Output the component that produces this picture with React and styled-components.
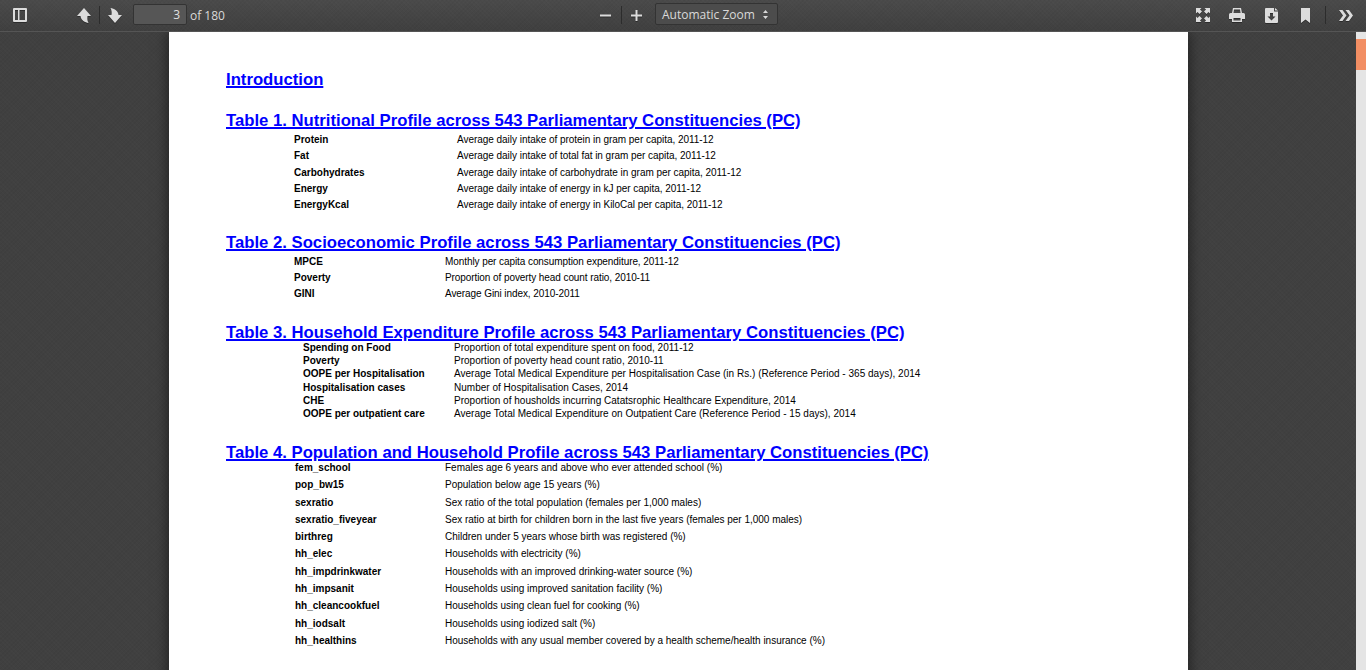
import React from "react";
import styled, { createGlobalStyle } from "styled-components";

const tables = [
  {
    title: "Table 1. Nutritional Profile across 543 Parliamentary Constituencies (PC)",
    gap: 20,
    after: 1,
    inset: 68,
    column: 163,
    rowHeight: 16.3,
    tracking: -0.035,
    rows: [
      ["Protein", "Average daily intake of protein in gram per capita, 2011-12"],
      ["Fat", "Average daily intake of total fat in gram per capita, 2011-12"],
      ["Carbohydrates", "Average daily intake of carbohydrate in gram per capita, 2011-12"],
      ["Energy", "Average daily intake of energy in kJ per capita, 2011-12"],
      ["EnergyKcal", "Average daily intake of energy in KiloCal per capita, 2011-12"],
    ],
  },
  {
    title: "Table 2. Socioeconomic Profile across 543 Parliamentary Constituencies (PC)",
    gap: 19.5,
    after: 1,
    inset: 68,
    column: 151,
    rowHeight: 16,
    tracking: -0.08,
    rows: [
      ["MPCE", "Monthly per capita consumption expenditure, 2011-12"],
      ["Poverty", "Proportion of poverty head count ratio, 2010-11"],
      ["GINI", "Average Gini index, 2010-2011"],
    ],
  },
  {
    title: "Table 3. Household Expenditure Profile across 543 Parliamentary Constituencies (PC)",
    gap: 21,
    after: -2,
    inset: 77,
    column: 151,
    rowHeight: 13.2,
    tracking: 0.015,
    rows: [
      ["Spending on Food", "Proportion of total expenditure spent on food, 2011-12"],
      ["Poverty", "Proportion of poverty head count ratio, 2010-11"],
      ["OOPE per Hospitalisation", "Average Total Medical Expenditure per Hospitalisation Case (in Rs.) (Reference Period - 365 days), 2014"],
      ["Hospitalisation cases", "Number of Hospitalisation Cases, 2014"],
      ["CHE", "Proportion of housholds incurring Catatsrophic Healthcare Expenditure, 2014"],
      ["OOPE per outpatient care", "Average Total Medical Expenditure on Outpatient Care (Reference Period - 15 days), 2014"],
    ],
  },
  {
    title: "Table 4. Population and Household Profile across 543 Parliamentary Constituencies (PC)",
    gap: 23,
    after: -4,
    inset: 69,
    column: 150,
    rowHeight: 17.28,
    tracking: -0.01,
    rows: [
      ["fem_school", "Females age 6 years and above who ever attended school (%)"],
      ["pop_bw15", "Population below age 15 years (%)"],
      ["sexratio", "Sex ratio of the total population (females per 1,000 males)"],
      ["sexratio_fiveyear", "Sex ratio at birth for children born in the last five years (females per 1,000 males)"],
      ["birthreg", "Children under 5 years whose birth was registered (%)"],
      ["hh_elec", "Households with electricity (%)"],
      ["hh_impdrinkwater", "Households with an improved drinking-water source (%)"],
      ["hh_impsanit", "Households using improved sanitation facility (%)"],
      ["hh_cleancookfuel", "Households using clean fuel for cooking (%)"],
      ["hh_iodsalt", "Households using iodized salt (%)"],
      ["hh_healthins", "Households with any usual member covered by a health scheme/health insurance (%)"],
    ],
  },
];

const Icon = ({ w, h, children }) => (
  <IconSvg width={w} height={h} viewBox={`0 0 ${w} ${h}`}>
    {children}
  </IconSvg>
);

const App = () => {
  return (
    <Shell>
      <GlobalStyle />
      <Toolbar>
        <ToolGroup>
          <ToolButton $width={14} $left={13}>
            <Icon w={14} h={14}>
              <path fillRule="evenodd" d="M1 0h12a1 1 0 0 1 1 1v12a1 1 0 0 1-1 1H1a1 1 0 0 1-1-1V1a1 1 0 0 1 1-1zM2 2v10h3V2zM6.500 2v10H12V2z" />
            </Icon>
          </ToolButton>
          <ToolButton $width={14} $left={50}>
            <Icon w={14} h={15}>
              <path d="M7 0l7 8h-3.500c-.5 3 0 5 1 7-3.500-.5-7.500-2.500-8-7H0z" />
            </Icon>
          </ToolButton>
          <Divider $left={8} />
          <ToolButton $width={14} $left={8}>
            <Icon w={14} h={15}>
              <path d="M7 15L0 7h3.500c.5-3 0-5-1-7 3.500.5 7.500 2.500 8 7H14z" />
            </Icon>
          </ToolButton>
          <PageInput>3</PageInput>
          <PageCount>of 180</PageCount>
        </ToolGroup>
        <ZoomGroup>
          <ToolButton $width={11} $top={1}>
            <Icon w={11} h={11}>
              <rect x="0" y="4.500" width="11" height="2" />
            </Icon>
          </ToolButton>
          <Divider $left={10} />
          <ToolButton $width={11} $left={9} $top={1}>
            <Icon w={11} h={11}>
              <path d="M4.500 0h2v4.500H11v2H6.500V11h-2V6.500H0v-2h4.500z" />
            </Icon>
          </ToolButton>
          <ZoomSelect>
            Automatic Zoom
            <SelectArrows width="7" height="11" viewBox="0 0 7 11">
              <path d="M3.500 1L6 4H1zM3.500 10L1 7h5z" />
            </SelectArrows>
          </ZoomSelect>
        </ZoomGroup>
        <ToolGroup>
          <ToolButton $width={14}>
            <Icon w={14} h={14}>
              <path d="M0 0h5.500L4 1.500 6 3.500 3.500 6 1.500 4 0 5.500zM14 0v5.500L12.500 4l-2 2L8 3.500l2-2L8.500 0zM0 14V8.500L1.500 10l2-2L6 10.500l-2 2L5.500 14zM14 14H8.500l1.500-1.500-2-2L10.500 8l2 2L14 8.500z" />
            </Icon>
          </ToolButton>
          <ToolButton $width={16} $left={19}>
            <Icon w={16} h={14}>
              <path fillRule="evenodd" d="M4 0h8l1 5h1.500A1.500 1.500 0 0 1 16 6.500V11h-3v3H3v-3H0V6.500A1.500 1.500 0 0 1 1.500 5H3zM5 1.500L4.500 5h7L11 1.500zM4.500 10v2.500h7V10z" />
            </Icon>
          </ToolButton>
          <ToolButton $width={13} $left={20}>
            <Icon w={13} h={15}>
              <path fillRule="evenodd" d="M0 1a1 1 0 0 1 1-1h8v3.500h4V14a1 1 0 0 1-1 1H1a1 1 0 0 1-1-1zM5 5v3.500H2.500l4 4 4-4H8V5zM10 0l3 2.500h-3z" />
            </Icon>
          </ToolButton>
          <ToolButton $width={9} $left={23}>
            <Icon w={9} h={15}>
              <path d="M0 0h9v15l-4.500-3.500L0 15z" />
            </Icon>
          </ToolButton>
          <Divider $left={15} />
          <ToolButton $width={14} $left={13}>
            <Icon w={14} h={11}>
              <path d="M0 0h3.500l4 5.500-4 5.500H0l4-5.500zM6.500 0H10l4 5.500L10 11H6.500l4-5.500z" />
            </Icon>
          </ToolButton>
        </ToolGroup>
      </Toolbar>
      <Viewer>
        <Page>
          <Intro>Introduction</Intro>
          {tables.map((table) => (
            <section key={table.title}>
              <TableTitle $gap={table.gap} $after={table.after}>{table.title}</TableTitle>
              {table.rows.map(([name, description]) => (
                <Row key={name + description} $inset={table.inset} $column={table.column} $height={table.rowHeight} $tracking={table.tracking}>
                  <VarName>{name}</VarName>
                  <span>{description}</span>
                </Row>
              ))}
            </section>
          ))}
        </Page>
      </Viewer>
      <Scrollbar>
        <Thumb />
      </Scrollbar>
    </Shell>
  );
};

export default App;

const GlobalStyle = createGlobalStyle`
  html, body {
    margin: 0;
    height: 100%;
    overflow: hidden;
    background: #404040;
  }
`;

const weave = `
  repeating-linear-gradient(45deg, rgba(255, 255, 255, 0.012) 0 1px, transparent 1px 3px),
  repeating-linear-gradient(-45deg, rgba(0, 0, 0, 0.03) 0 1px, transparent 1px 3px)
`;

const Shell = styled.div`
  position: relative;
  height: 670px;
  display: flex;
  flex-direction: column;
  overflow: hidden;
`;

const Toolbar = styled.div`
  height: 32px;
  padding: 0 13px 2px 0;
  display: flex;
  align-items: center;
  justify-content: space-between;
  background: ${weave}, linear-gradient(#4a4a4a, #3f3f3f);
  box-shadow: inset 0 -1px 0 #555;
  box-sizing: border-box;
  position: relative;
  z-index: 2;
`;

const ToolGroup = styled.div`
  display: flex;
  align-items: center;
`;

const ZoomGroup = styled(ToolGroup)`
  position: absolute;
  left: 600px;
`;

const ToolButton = styled.div`
  width: ${(p) => p.$width}px;
  margin-left: ${(p) => p.$left || 0}px;
  margin-top: ${(p) => p.$top || 0}px;
  display: flex;
  align-items: center;
  justify-content: center;
`;

const IconSvg = styled.svg`
  fill: #dcdcdc;
  filter: drop-shadow(0 1px 0 rgba(0, 0, 0, 0.35));
`;

const SelectArrows = styled.svg`
  fill: #d9d9d9;
`;

const Divider = styled.div`
  width: 1px;
  height: 18px;
  margin-left: ${(p) => p.$left}px;
  background: #2c2c2c;
`;

const PageInput = styled.div`
  width: 54px;
  height: 21px;
  margin: -1px 0 0 11px;
  padding-right: 6px;
  box-sizing: border-box;
  border: 1px solid #333;
  border-radius: 2px;
  background: #565656;
  color: #e0e0e0;
  font: 12px/19px "Open Sans", sans-serif;
  text-align: right;
`;

const PageCount = styled.span`
  margin-left: 3px;
  color: #d9d9d9;
  font: 12px "Open Sans", sans-serif;
`;

const ZoomSelect = styled.div`
  width: 123px;
  height: 22px;
  margin: -2px 0 0 13px;
  padding: 0 8px 0 6px;
  box-sizing: border-box;
  display: flex;
  align-items: center;
  justify-content: space-between;
  border: 1px solid #333;
  border-radius: 2px;
  background: #4c4c4c;
  color: #d9d9d9;
  font: 12px "Open Sans", sans-serif;
`;

const Viewer = styled.main`
  flex: 1;
  min-height: 0;
  padding-left: 169px;
  background: ${weave}, #404040;
`;

const Page = styled.article`
  width: 1019px;
  height: 1400px;
  padding: 37px 0 0 57px;
  box-sizing: border-box;
  background: #fff;
  box-shadow: 0 0 14px rgba(0, 0, 0, 0.6);
  color: #000;
  font: 10px "Liberation Sans", Arial, sans-serif;
`;

const Intro = styled.h1`
  margin: 0;
  font-size: 16.7px;
  line-height: 22px;
  font-weight: 700;
  color: #0000ff;
  text-decoration: underline;
  text-decoration-thickness: 2px;
`;

const TableTitle = styled.h2`
  margin: ${(p) => p.$gap}px 0 ${(p) => p.$after}px;
  font-size: 16.7px;
  line-height: 20px;
  font-weight: 700;
  color: #0000ff;
  text-decoration: underline;
  text-decoration-thickness: 2px;
`;

const Row = styled.div`
  height: ${(p) => p.$height}px;
  line-height: ${(p) => p.$height}px;
  padding-left: ${(p) => p.$inset}px;
  display: grid;
  grid-template-columns: ${(p) => p.$column}px 1fr;
  letter-spacing: ${(p) => p.$tracking}px;
`;

const VarName = styled.span`
  font-weight: 700;
  letter-spacing: 0;
`;

const Scrollbar = styled.div`
  position: absolute;
  top: 32px;
  right: 0;
  bottom: 0;
  width: 10px;
  background: #e5e5e5;
`;

const Thumb = styled.div`
  height: 31px;
  margin-top: 7px;
  background: #f28e63;
`;
